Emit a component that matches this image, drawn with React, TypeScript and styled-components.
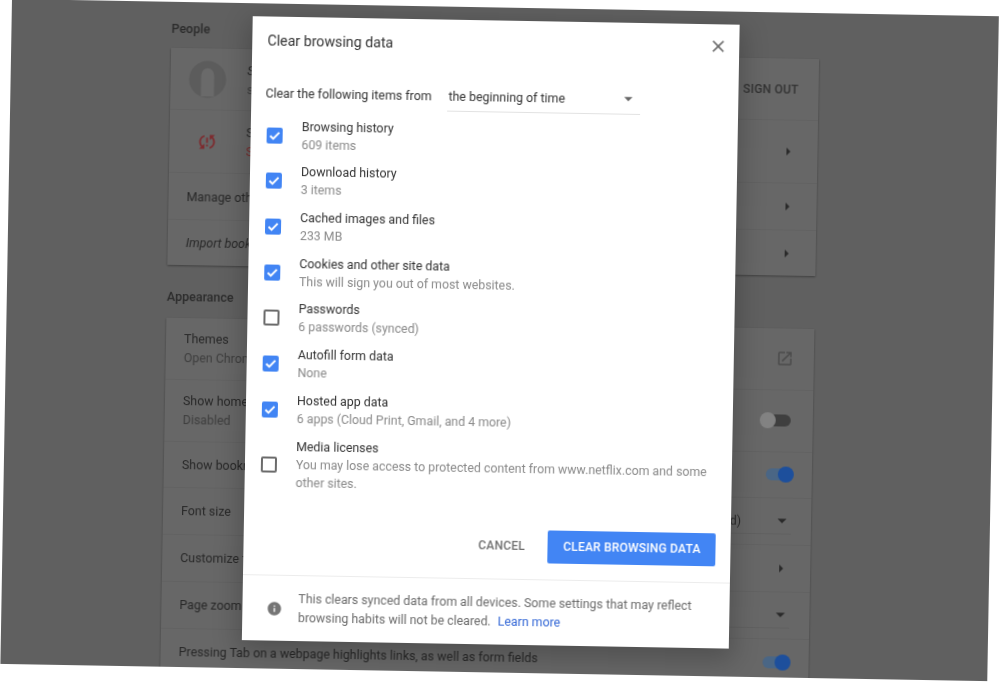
import React from 'react'
import styled, { createGlobalStyle } from 'styled-components'
import { MdSyncProblem, MdOpenInNew, MdInfo, MdClose, MdArrowDropDown } from 'react-icons/md'

const GlobalStyle = createGlobalStyle`
  html, body {
    margin: 0;
    height: 100%;
    overflow: hidden;
    background: #fff;
    font-family: Roboto, "Liberation Sans", sans-serif;
  }
`

const Tilted = styled.div`
  position: relative;
  width: 987px;
  height: 665px;
  margin: -1.3px 0 0 11.5px;
  padding: 8px 0 0 160px;
  box-sizing: border-box;
  overflow: hidden;
  background: #606060;
  transform: rotate(1deg);
  transform-origin: 0 0;
  filter: blur(0.5px);
`

const SectionTitle = styled.h2`
  margin: 0;
  height: 40px;
  line-height: 38.5px;
  font-size: 12.5px;
  font-weight: 500;
  color: #2b2b2b;
  &:first-child {
    height: 38px;
  }
`

const Card = styled.section`
  width: 648px;
  margin-bottom: 12.5px;
  background: #676767;
  box-shadow: 0 1px 2px rgba(0, 0, 0, 0.35);
`

const Row = styled.div<{ $h: number }>`
  display: flex;
  align-items: center;
  height: ${p => p.$h}px;
  padding: 0 20px 0 18px;
  box-sizing: border-box;
  border-top: 1px solid #626262;
  &:first-child {
    border-top: 0;
  }
`

const RowBody = styled.div`
  flex: 1;
  min-width: 0;
`

const RowLabel = styled.div<{ $italic?: boolean }>`
  font-size: 12.4px;
  line-height: 19px;
  color: #282828;
  font-style: ${p => (p.$italic ? 'italic' : 'normal')};
  white-space: nowrap;
`

const RowHint = styled.div<{ $tone?: string }>`
  font-size: 12.4px;
  line-height: 19px;
  color: ${p => p.$tone || '#3e3e3e'};
  white-space: nowrap;
`

const Lead = styled.div`
  flex: none;
  width: 58.5px;
  display: flex;
  align-items: center;
  justify-content: flex-start;
`

const SyncIcon = styled(MdSyncProblem)`
  margin-left: 9px;
  color: #7e2a2e;
`

const SignOut = styled.span`
  font-size: 12px;
  font-weight: 500;
  letter-spacing: 0.2px;
  color: #333;
`

const Arrow = styled.span`
  margin-right: 7px;
  width: 0;
  height: 0;
  border-left: 4px solid #2a2a2a;
  border-top: 4px solid transparent;
  border-bottom: 4px solid transparent;
`

const ExternalIcon = styled(MdOpenInNew)`
  color: #4c4c4c;
`

const Toggle = styled.span<{ $on?: boolean }>`
  position: relative;
  width: 24px;
  height: 12px;
  margin-right: 2px;
  border-radius: 6px;
  background: ${p => (p.$on ? '#4a6685' : '#3f3f3f')};
  &::after {
    content: '';
    position: absolute;
    top: -2px;
    left: ${p => (p.$on ? '12px' : '-7px')};
    width: 16px;
    height: 16px;
    border-radius: 50%;
    background: ${p => (p.$on ? '#1d4f9c' : '#828282')};
  }
`

const PageSelect = styled.div`
  display: flex;
  align-items: center;
  justify-content: space-between;
  width: 190px;
  height: 26px;
  font-size: 12.4px;
  color: #2b2b2b;
  border-bottom: 1px solid #606060;
  svg {
    margin-right: -2px;
    color: #2a2a2a;
  }
`

const Dialog = styled.div`
  position: absolute;
  left: 240.8px;
  top: 13.1px;
  width: 487px;
  height: 624px;
  display: flex;
  flex-direction: column;
  background: #fff;
  color: #333;
  box-shadow: 0 8px 24px 4px rgba(0, 0, 0, 0.22);
`

const DialogHead = styled.div`
  flex: none;
  height: 44px;
  padding: 5px 11px 0 15.4px;
  box-sizing: border-box;
  display: flex;
  align-items: center;
  justify-content: space-between;
`

const DialogTitle = styled.h1`
  margin: -1px 0 0;
  font-size: 14.2px;
  font-weight: 400;
  color: #333;
`

const CloseIcon = styled(MdClose)`
  color: #6b6b6b;
  margin-top: -5px;
`

const RangeRow = styled.div`
  flex: none;
  display: flex;
  align-items: center;
  height: 30px;
  margin-top: 17.8px;
  padding-left: 14.4px;
  font-size: 12.4px;
  color: #333;
`

const RangeLabel = styled.span`
  width: 182px;
  white-space: nowrap;
`

const RangeSelect = styled.div`
  display: flex;
  align-items: center;
  justify-content: space-between;
  width: 193px;
  height: 30px;
  padding-left: 1px;
  box-sizing: border-box;
  border-bottom: 1px solid #e2e2e2;
  svg {
    color: #666;
    margin-right: 2px;
  }
`

const Items = styled.div`
  flex: none;
  margin-top: 4px;
`

const Item = styled.div`
  display: flex;
  align-items: center;
  padding: 4.85px 0 4.85px 16.6px;
`

const Box = styled.span<{ $on: boolean }>`
  flex: none;
  width: 16px;
  height: 16px;
  box-sizing: border-box;
  margin-right: 18.6px;
  border-radius: 2px;
  display: flex;
  align-items: center;
  justify-content: center;
  background: ${p => (p.$on ? '#4285f4' : '#fff')};
  border: 2px solid ${p => (p.$on ? '#4285f4' : '#6b6b6b')};
`

const ItemBody = styled.div`
  width: 418px;
  line-height: 18px;
`

const ItemName = styled.div`
  font-size: 12.4px;
  color: #333;
`

const ItemHint = styled.div`
  font-size: 12.35px;
  color: #8a8a8a;
`

const Actions = styled.div`
  flex: none;
  display: flex;
  align-items: center;
  justify-content: flex-end;
  height: 33px;
  margin-top: 29.6px;
  padding-right: 14.4px;
`

const Cancel = styled.span`
  margin-right: 23px;
  font-size: 12px;
  font-weight: 500;
  letter-spacing: 0.2px;
  color: #6f6f6f;
`

const ClearButton = styled.span`
  width: 168px;
  height: 33px;
  line-height: 33px;
  text-align: center;
  font-size: 12px;
  font-weight: 500;
  letter-spacing: 0.2px;
  color: #fff;
  background: #4285f4;
  border-radius: 2px;
`

const Footer = styled.div`
  flex: 1;
  margin-top: 16px;
  display: flex;
  align-items: center;
  padding: 1px 0 0 24px;
  border-top: 1px solid #ececec;
  svg {
    flex: none;
    color: #757575;
    margin-right: 16px;
  }
`

const FooterText = styled.p`
  margin: 0;
  width: 410px;
  font-size: 12.35px;
  line-height: 19.5px;
  color: #6b6b6b;
`

const LearnMore = styled.span`
  margin-left: 7px;
  color: #3367d6;
`

const Check = () => (
  <svg width="12" height="12" viewBox="0 0 12 12" fill="none">
    <path d="M1.5 6.2 L4.6 9.2 L10.6 2.9" stroke="#fff" strokeWidth="2" />
  </svg>
)

const Avatar = () => (
  <svg width="38" height="38" viewBox="0 0 38 38">
    <circle cx="19" cy="19" r="18.5" fill="#5c5c5c" />
    <path d="M12.5 36 V16 C12.5 5 25.5 5 25.5 16 V36 Z" fill="#6a6a6a" />
  </svg>
)

const items = [
  { name: 'Browsing history', hint: '609 items', on: true },
  { name: 'Download history', hint: '3 items', on: true },
  { name: 'Cached images and files', hint: '233 MB', on: true },
  { name: 'Cookies and other site data', hint: 'This will sign you out of most websites.', on: true },
  { name: 'Passwords', hint: '6 passwords (synced)', on: false },
  { name: 'Autofill form data', hint: 'None', on: true },
  { name: 'Hosted app data', hint: '6 apps (Cloud Print, Gmail, and 4 more)', on: true },
  {
    name: 'Media licenses',
    hint: 'You may lose access to protected content from www.netflix.com and some other sites.',
    on: false,
  },
]

export default function App() {
  return (
    <>
      <GlobalStyle />
      <Tilted>
        <SectionTitle>People</SectionTitle>
        <Card>
          <Row $h={61}>
            <Lead><Avatar /></Lead>
            <RowBody>
              <RowLabel $italic>Signed in</RowLabel>
              <RowHint>sync</RowHint>
            </RowBody>
            <SignOut>SIGN OUT</SignOut>
          </Row>
          <Row $h={63}>
            <Lead><SyncIcon size={21} /></Lead>
            <RowBody>
              <RowLabel>Sync</RowLabel>
              <RowHint $tone="#7a2a2a">Sync isn't working</RowHint>
            </RowBody>
            <Arrow />
          </Row>
          <Row $h={47}>
            <RowBody><RowLabel>Manage other people</RowLabel></RowBody>
            <Arrow />
          </Row>
          <Row $h={46}>
            <RowBody><RowLabel $italic>Import bookmarks and settings</RowLabel></RowBody>
            <Arrow />
          </Row>
        </Card>

        <SectionTitle>Appearance</SectionTitle>
        <Card>
          <Row $h={61}>
            <RowBody>
              <RowLabel>Themes</RowLabel>
              <RowHint>Open Chrome Web Store</RowHint>
            </RowBody>
            <ExternalIcon size={18} />
          </Row>
          <Row $h={62}>
            <RowBody>
              <RowLabel>Show home button</RowLabel>
              <RowHint>Disabled</RowHint>
            </RowBody>
            <Toggle />
          </Row>
          <Row $h={46}>
            <RowBody><RowLabel>Show bookmarks bar</RowLabel></RowBody>
            <Toggle $on />
          </Row>
          <Row $h={47}>
            <RowBody><RowLabel>Font size</RowLabel></RowBody>
            <PageSelect>Medium (Recommended)<MdArrowDropDown size={22} /></PageSelect>
          </Row>
          <Row $h={47}>
            <RowBody><RowLabel>Customize fonts</RowLabel></RowBody>
            <Arrow />
          </Row>
          <Row $h={47}>
            <RowBody><RowLabel>Page zoom</RowLabel></RowBody>
            <PageSelect>100%<MdArrowDropDown size={22} /></PageSelect>
          </Row>
          <Row $h={47}>
            <RowBody><RowLabel>Pressing Tab on a webpage highlights links, as well as form fields</RowLabel></RowBody>
            <Toggle $on />
          </Row>
        </Card>

        <Dialog>
          <DialogHead>
            <DialogTitle>Clear browsing data</DialogTitle>
            <CloseIcon size={20} />
          </DialogHead>
          <RangeRow>
            <RangeLabel>Clear the following items from</RangeLabel>
            <RangeSelect>the beginning of time<MdArrowDropDown size={20} /></RangeSelect>
          </RangeRow>
          <Items>
            {items.map(item => (
              <Item key={item.name}>
                <Box $on={item.on}>{item.on && <Check />}</Box>
                <ItemBody>
                  <ItemName>{item.name}</ItemName>
                  <ItemHint>{item.hint}</ItemHint>
                </ItemBody>
              </Item>
            ))}
          </Items>
          <Actions>
            <Cancel>CANCEL</Cancel>
            <ClearButton>CLEAR BROWSING DATA</ClearButton>
          </Actions>
          <Footer>
            <MdInfo size={16} />
            <FooterText>
              This clears synced data from all devices. Some settings that may reflect browsing habits will not be cleared.
              <LearnMore>Learn more</LearnMore>
            </FooterText>
          </Footer>
        </Dialog>
      </Tilted>
    </>
  )
}
